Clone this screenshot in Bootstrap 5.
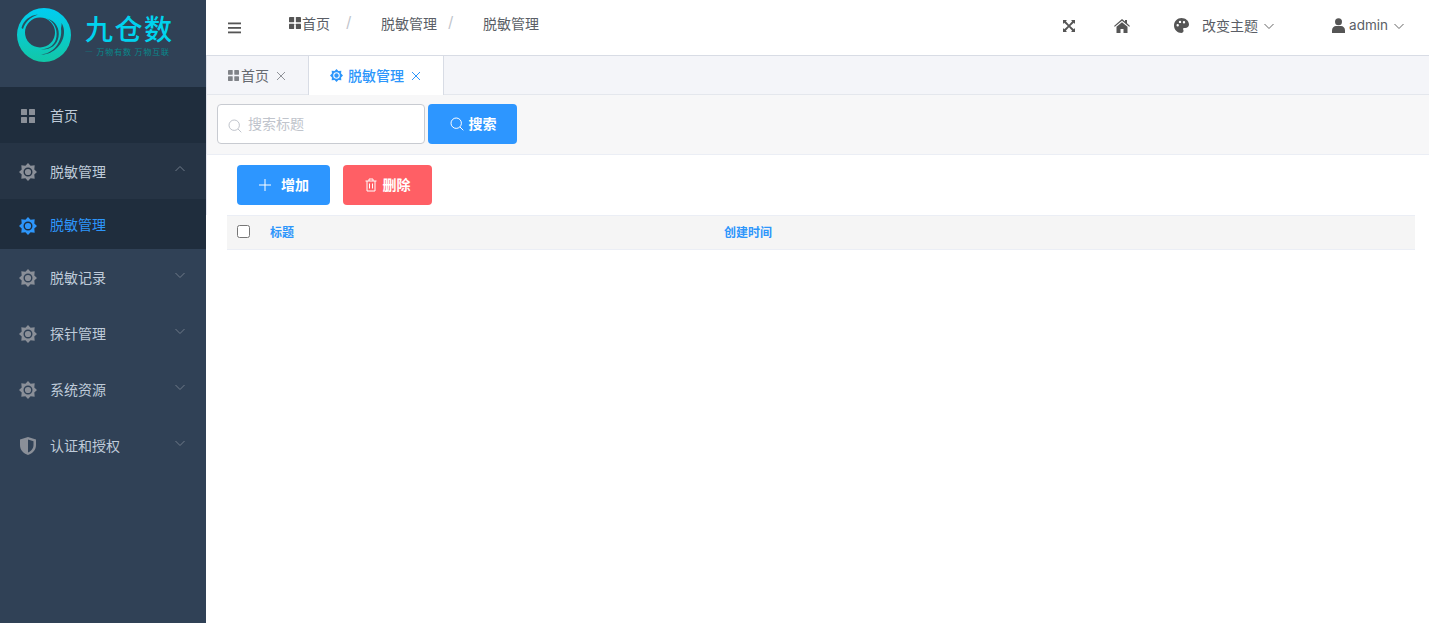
<!DOCTYPE html>
<html lang="zh">
<head>
<meta charset="utf-8">
<title>脱敏管理</title>
<link rel="stylesheet" href="https://cdn.jsdelivr.net/npm/bootstrap@5.3.0/dist/css/bootstrap.min.css">
<style>
html,body{height:100%;}
body{font-family:Inter,"Noto Sans CJK SC",sans-serif;font-size:14px;color:#5a5e66;background:#fff;overflow:hidden;}
.app-shell{height:623px;}
.side{width:206px;flex:none;background:#304156;color:#bfcbd9;}
.logo-box{height:87px;padding:8px 0 0 17px;gap:14px;}
.logo-name{font-size:28px;line-height:28px;font-weight:500;color:#00d2ee;letter-spacing:1.5px;margin-top:6px;white-space:nowrap;font-family:"Noto Sans CJK SC",sans-serif;}
.logo-sub{font-size:8px;line-height:10px;color:#07898c;white-space:nowrap;margin-top:5px;letter-spacing:.85px;font-family:"Noto Sans CJK SC",sans-serif;}
.menu-row{height:56px;padding-left:19px;padding-right:20px;font-size:14px;color:#bfcbd9;}
.menu-row svg.mi{width:18px;height:18px;margin-right:13px;margin-top:2px;fill:#8a8f98;flex:none;}
.menu-row .arrow{width:12px;height:12px;margin-top:-4px;margin-left:auto;margin-right:0;stroke:#6f7a89;fill:none;stroke-width:1;}
.menu-home{background:#1f2d3d;}
.menu-open{background:#263445;}
.menu-sub{height:50px;background:#1f2d3d;color:#2d96fb;}
.menu-row.menu-sub svg.mi{fill:#2d96fb;margin-top:4px;}
.top-bar{height:56px;border-bottom:1px solid #d8dce5;padding-left:22px;padding-right:24px;font-size:14px;}
.burger{width:14px;height:14px;margin-right:47px;fill:#555;margin-top:1px;}
.crumb-row{margin-top:-9px;}
.crumb-sep{color:#c0c4cc;font-size:15px;width:51px;padding-left:16px;position:relative;top:-1px;}
.crumb-sep2{width:46px;padding-left:11px;}
.crumb-icon{width:12px;height:12px;fill:#555;margin-right:1px;}
.top-right{margin-top:-4px;}
.top-right svg{fill:#555;}
.top-right .chev{width:12px;height:12px;fill:none;stroke:#666;stroke-width:1;margin-left:5px;}
.admin-name{font-size:13.5px;}
.ico-expand{margin-right:38px;}
.ico-home{margin-right:44px;}
.ico-palette{margin-right:13px;}
.ico-user{margin-left:57px;margin-right:4px;}
.tab-bar{height:39px;background:#f4f5f9;border-bottom:1px solid #e4e7ed;border-left:1px solid #dfe2ea;}
.tab-item{height:39px;font-size:14px;color:#66696f;border-right:1px solid #d8dce5;}
.tab-first{padding-left:21px;width:102px;}
.tab-item svg.ti{width:11px;height:11px;fill:#808388;margin-right:2px;}
.tab-item svg.tx{width:10px;height:10px;stroke:#909399;stroke-width:1;margin-left:7px;fill:none;}
.tab-on{background:#fff;color:#2d96fb;font-weight:500;width:135px;padding-left:21px;}
.tab-item.tab-on svg.ti{fill:#2d96fb;width:13px;height:13px;margin-right:5px;}
.tab-item.tab-on svg.tx{stroke:#2d96fb;}
.search-zone{height:60px;background:#f7f7f8;border-bottom:1px solid #ebeef5;border-left:1px solid #dfe2ea;padding:9px 0 0 10px;}
.search-field{width:208px;height:40px;border:1px solid #c8cbd1;border-radius:4px;background:#fff;padding:0 0 2px 10px;color:#c0c4cc;font-size:14px;}
.search-field svg{width:14px;height:14px;stroke:#c0c4cc;fill:none;stroke-width:1;margin-right:6px;margin-top:5px;}
.act-btn{height:40px;border:0;border-radius:4px;color:#fff;font-size:14px;font-weight:600;padding:0 0 2px;display:flex;align-items:center;justify-content:center;}
.act-blue{background:#2d96ff;}
.act-red{background:#ff5f65;}
.act-btn svg{stroke:#fff;fill:none;stroke-width:1;margin-top:2px;}
.btn-search{width:89px;margin-left:3px;}
.btn-search svg{margin-right:5px;margin-left:1px;}
.btn-add{width:93px;}
.btn-add svg{margin-right:9px;}
.btn-del{width:89px;margin-left:13px;}
.btn-del svg{margin-right:5px;margin-left:-1px;}
.tool-zone{padding:10px 0 0 30px;height:60px;border-left:1px solid #e6e8f0;}
.grid-head{margin:0 14px 0 21px;height:35px;background:#f5f5f5;border-top:1px solid #ebeef5;border-bottom:1px solid #ebeef5;font-size:12px;font-weight:600;color:#2d96fb;padding-left:10px;}
.grid-check{width:13px;height:13px;border:1px solid #767676;border-radius:2.5px;background:#fff;margin-right:20px;margin-top:-3px;flex:none;}
.col-title{width:454px;}
</style>
</head>
<body>
<svg width="0" height="0" class="d-block position-absolute">
<defs>
<symbol id="i-gear" viewBox="0 0 18 18"><path fill-rule="evenodd" d="M18 9L15.300 11.600 15.700 15.700 11.600 15.300 9 18 6.400 15.300 2.300 15.700 2.700 11.600 0 9 2.700 6.400 2.300 2.300 6.400 2.700 9 0 11.600 2.700 15.700 2.300 15.300 6.400zM9 4.500a4.500 4.500 0 1 0 0 9 4.500 4.500 0 0 0 0-9zM9 5.900a3.100 3.100 0 1 1 0 6.200 3.100 3.100 0 0 1 0-6.200z"/></symbol>
<symbol id="i-grid" viewBox="0 0 14 14"><rect x="0" y="0" width="6" height="6" rx=".5"/><rect x="8" y="0" width="6" height="6" rx=".5"/><rect x="0" y="8" width="6" height="6" rx=".5"/><rect x="8" y="8" width="6" height="6" rx=".5"/></symbol>
<symbol id="i-down" viewBox="0 0 12 12"><path d="M1.500 4l4.500 4.500L10.500 4"/></symbol>
<symbol id="i-up" viewBox="0 0 12 12"><path d="M1.500 8L6 3.500 10.500 8"/></symbol>
<symbol id="i-x" viewBox="0 0 10 10"><path d="M1 1l8 8M9 1L1 9"/></symbol>
<symbol id="i-search" viewBox="0 0 14 14"><circle cx="6.200" cy="6.200" r="5.200"/><path d="M10 10l3.300 3.300"/></symbol>
</defs>
</svg>
<div class="app-shell d-flex">
  <aside class="side d-flex flex-column">
    <div class="logo-box d-flex">
      <svg width="54" height="54" viewBox="0 0 54 54" class="flex-shrink-0">
        <defs><linearGradient id="lg" x1="0" y1="0" x2="0" y2="1"><stop offset="0" stop-color="#00cdf2"/><stop offset="1" stop-color="#12c7a6"/></linearGradient></defs>
        <circle cx="27" cy="27" r="27" fill="url(#lg)"/>
        <circle cx="23" cy="24.500" r="15" fill="#304156"/>
        <path d="M30 10.500C37 14 40.500 21 39.500 28.500 38.500 36 33 41 24 41.500 33.500 42 40 37 41.500 29 43 21 39 13 30 10.500z" fill="#27505f"/>
        <path d="M44 21C45.500 31 39 45 24 46.500 36 47 47.500 36 47 23 46.900 20 46 17 44.500 15 45 17 44 19 44 21z" fill="#27505f"/>
        <path d="M4.500 20C6 13 13 7 21 6.500 13 9.500 8 14 6 21z" fill="#27505f"/>
      </svg>
      <div>
        <div class="logo-name">九仓数</div>
        <div class="logo-sub">— 万物有数 万物互联</div>
      </div>
    </div>
    <div class="menu-row menu-home d-flex align-items-center"><svg class="mi"><use href="#i-grid" x="2" y="2" width="14" height="14"/></svg><span>首页</span></div>
    <div class="menu-row menu-open d-flex align-items-center"><svg class="mi"><use href="#i-gear"/></svg><span>脱敏管理</span><svg class="arrow"><use href="#i-up"/></svg></div>
    <div class="menu-row menu-sub d-flex align-items-center"><svg class="mi"><use href="#i-gear"/></svg><span>脱敏管理</span></div>
    <div class="menu-row d-flex align-items-center"><svg class="mi"><use href="#i-gear"/></svg><span>脱敏记录</span><svg class="arrow"><use href="#i-down"/></svg></div>
    <div class="menu-row d-flex align-items-center"><svg class="mi"><use href="#i-gear"/></svg><span>探针管理</span><svg class="arrow"><use href="#i-down"/></svg></div>
    <div class="menu-row d-flex align-items-center"><svg class="mi"><use href="#i-gear"/></svg><span>系统资源</span><svg class="arrow"><use href="#i-down"/></svg></div>
    <div class="menu-row d-flex align-items-center"><svg class="mi" viewBox="0 0 18 18"><path fill-rule="evenodd" d="M9 0l8 2.500V8c0 5-3.400 8.500-8 10-4.600-1.500-8-5-8-10V2.500L9 0zm0 2.500V15.500c3.200-1.300 5.500-4 5.500-7.500V4.300L9 2.500z"/></svg><span>认证和授权</span><svg class="arrow"><use href="#i-down"/></svg></div>
  </aside>
  <main class="flex-grow-1 d-flex flex-column">
    <header class="top-bar d-flex align-items-center">
      <svg class="burger" viewBox="0 0 14 14"><rect y="1.500" width="13" height="1.800"/><rect y="6" width="13" height="1.800"/><rect y="10.500" width="13" height="1.800"/></svg>
      <div class="crumb-row d-flex align-items-center">
        <svg class="crumb-icon"><use href="#i-grid"/></svg><span>首页</span><span class="crumb-sep">/</span><span>脱敏管理</span><span class="crumb-sep crumb-sep2">/</span><span>脱敏管理</span>
      </div>
      <div class="top-right ms-auto d-flex align-items-center">
        <svg width="14" height="14" viewBox="0 0 14 14" class="ico-expand"><path d="M1 1h4L3.800 2.200 7 5.800 10.200 2.200 9 1h4v4l-1.200-1.200L8.200 7l3.600 3.200L13 9v4H9l1.200-1.200L7 8.200l-3.200 3.600L5 13H1V9l1.200 1.200L5.800 7 2.200 3.800 1 5z"/></svg>
        <svg width="16" height="14" viewBox="0 0 16 14" class="ico-home"><path d="M8 0l3 2.500V1h2v3.200L16 7l-.8.800L8 1.800.8 7.800 0 7zM8 3.200l5.500 4.600V14H9.500v-4h-3v4H2.500V7.800z"/></svg>
        <svg width="15" height="15" viewBox="0 0 15 15" class="ico-palette"><path fill-rule="evenodd" d="M7.500 0C11.600 0 15 2.900 15 6.500c0 2.300-1.800 3.500-3.700 3.500H10c-.9 0-1.200.8-.8 1.500.5.800.5 1.500.1 2.300-.3.700-1 1.200-1.800 1.200C3.400 15 0 11.600 0 7.500S3.400 0 7.500 0zM3.700 6a1.200 1.200 0 1 0 0 2.400 1.200 1.200 0 0 0 0-2.400zM6 2.700A1.200 1.200 0 1 0 6 5.100 1.200 1.200 0 0 0 6 2.700zm4 .4a1.200 1.200 0 1 0 0 2.400 1.200 1.200 0 0 0 0-2.400z"/></svg>
        <span>改变主题</span>
        <svg class="chev"><use href="#i-down"/></svg>
        <svg width="13" height="15" viewBox="0 0 13 15" class="ico-user"><circle cx="6.500" cy="3.700" r="3.500"/><path d="M0 15v-2.500C0 9.500 2 8 4 8h5c2 0 4 1.500 4 4.500V15z"/></svg>
        <span class="admin-name">admin</span>
        <svg class="chev"><use href="#i-down"/></svg>
      </div>
    </header>
    <nav class="tab-bar d-flex">
      <div class="tab-item tab-first d-flex align-items-center"><svg class="ti"><use href="#i-grid"/></svg><span>首页</span><svg class="tx"><use href="#i-x"/></svg></div>
      <div class="tab-item tab-on d-flex align-items-center"><svg class="ti"><use href="#i-gear"/></svg><span>脱敏管理</span><svg class="tx"><use href="#i-x"/></svg></div>
    </nav>
    <section class="search-zone d-flex align-items-start">
      <div class="search-field d-flex align-items-center"><svg><use href="#i-search"/></svg>搜索标题</div>
      <button type="button" class="act-btn act-blue btn-search"><svg width="14" height="14"><use href="#i-search"/></svg>搜索</button>
    </section>
    <section class="tool-zone d-flex align-items-start">
      <button type="button" class="act-btn act-blue btn-add"><svg width="14" height="14" viewBox="0 0 14 14"><path d="M7 1v12M1 7h12"/></svg>增加</button>
      <button type="button" class="act-btn act-red btn-del"><svg width="14" height="14" viewBox="0 0 14 14"><path d="M1.500 3h11M5 3V1h4v2M3 3v10h8V3M5.500 5.500v5M8.500 5.500v5"/></svg>删除</button>
    </section>
    <div class="grid-head d-flex align-items-center">
      <span class="grid-check"></span><span class="col-title">标题</span><span>创建时间</span>
    </div>
  </main>
</div>
<script src="https://cdn.jsdelivr.net/npm/bootstrap@5.3.0/dist/js/bootstrap.bundle.min.js"></script>
</body>
</html>
